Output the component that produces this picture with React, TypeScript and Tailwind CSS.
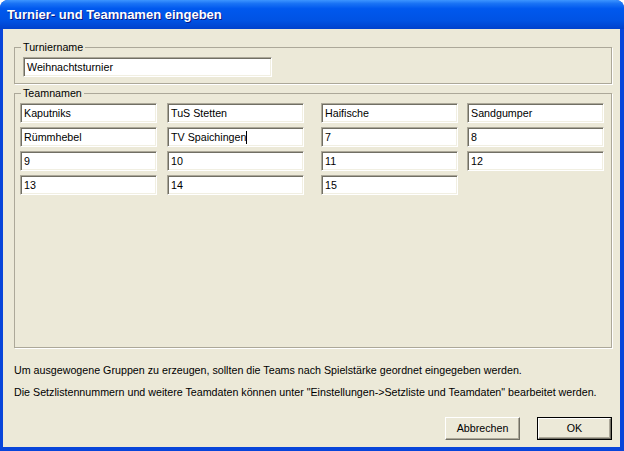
import React from "react"

const teams = [
  "Kaputniks",
  "TuS Stetten",
  "Haifische",
  "Sandgumper",
  "Rümmhebel",
  "TV Spaichingen",
  "7",
  "8",
  "9",
  "10",
  "11",
  "12",
  "13",
  "14",
  "15",
]

function TextBox({ value, width, caret }: { value: string; width: string; caret?: boolean }) {
  return (
    <div
      className={`${width} h-[20px] bg-white border border-t-[#aca899] border-l-[#aca899] border-b-white border-r-white shadow-[inset_1px_1px_0_#716f64,inset_-1px_-1px_0_#f1efe2] pl-[3px] flex items-center text-[10.7px] leading-none text-black whitespace-nowrap`}
    >
      {value}
      {caret && <span className="inline-block w-px h-[13px] bg-black" />}
    </div>
  )
}

function Button({ label, isDefault }: { label: string; isDefault?: boolean }) {
  return (
    <div className={`w-[75px] h-[23px] ${isDefault ? "border border-black" : ""}`}>
      <div className="w-full h-full bg-[#ece9d8] border border-t-white border-l-white border-b-[#716f64] border-r-[#716f64] shadow-[inset_-1px_-1px_0_#aca899] flex items-center justify-center text-[10.7px] text-black">
        {label}
      </div>
    </div>
  )
}

export default function App() {
  return (
    <div className="w-[624px] h-[451px] flex flex-col rounded-t-[8px] bg-[#0845da] overflow-hidden font-['Liberation_Sans',Arial,sans-serif] text-black">
      <div className="h-[29px] shrink-0 bg-[linear-gradient(to_bottom,#3d95ff_0%,#1a73f5_12%,#0058ee_30%,#0053e4_70%,#0041cc_100%)] flex items-center pl-[7px] pt-[1px]">
        <span className="text-white font-bold text-[13px] [text-shadow:1px_1px_0_#0a1883]">
          Turnier- und Teamnamen eingeben
        </span>
      </div>
      <div className="flex-1 ml-[3px] mr-[4px] mb-[4px] bg-[#ece9d8] flex flex-col pl-[11px] pt-[12px]">
        <fieldset className="w-[598px] h-[43px] border border-[#aca899] shadow-[1px_1px_0_white]">
          <legend className="ml-[6px] px-[2px] text-[10.7px] leading-[13px]">Turniername</legend>
          <div className="pl-[8px] pt-[3px]">
            <TextBox value="Weihnachtsturnier" width="w-[249px]" />
          </div>
        </fieldset>
        <fieldset className="mt-[3px] w-[598px] h-[261px] border border-[#aca899] shadow-[1px_1px_0_white]">
          <legend className="ml-[6px] px-[2px] text-[10.7px] leading-[13px]">Teamnamen</legend>
          <div className="grid grid-cols-[147px_154px_146px_137px] gap-y-[4px] pl-[5px] pt-[3px]">
            {teams.map((t) => (
              <TextBox key={t} value={t} width="w-[137px]" caret={t === "TV Spaichingen"} />
            ))}
          </div>
        </fieldset>
        <p className="mt-[16px] text-[10.7px] leading-[13px]">
          Um ausgewogene Gruppen zu erzeugen, sollten die Teams nach Spielstärke geordnet eingegeben werden.
        </p>
        <p className="mt-[9px] text-[10.7px] leading-[13px]">
          Die Setzlistennummern und weitere Teamdaten können unter "Einstellungen-&gt;Setzliste und Teamdaten" bearbeitet werden.
        </p>
        <div className="mt-auto flex justify-end gap-[17px] pr-[8px] pb-[7px]">
          <Button label="Abbrechen" />
          <Button label="OK" isDefault />
        </div>
      </div>
    </div>
  )
}
